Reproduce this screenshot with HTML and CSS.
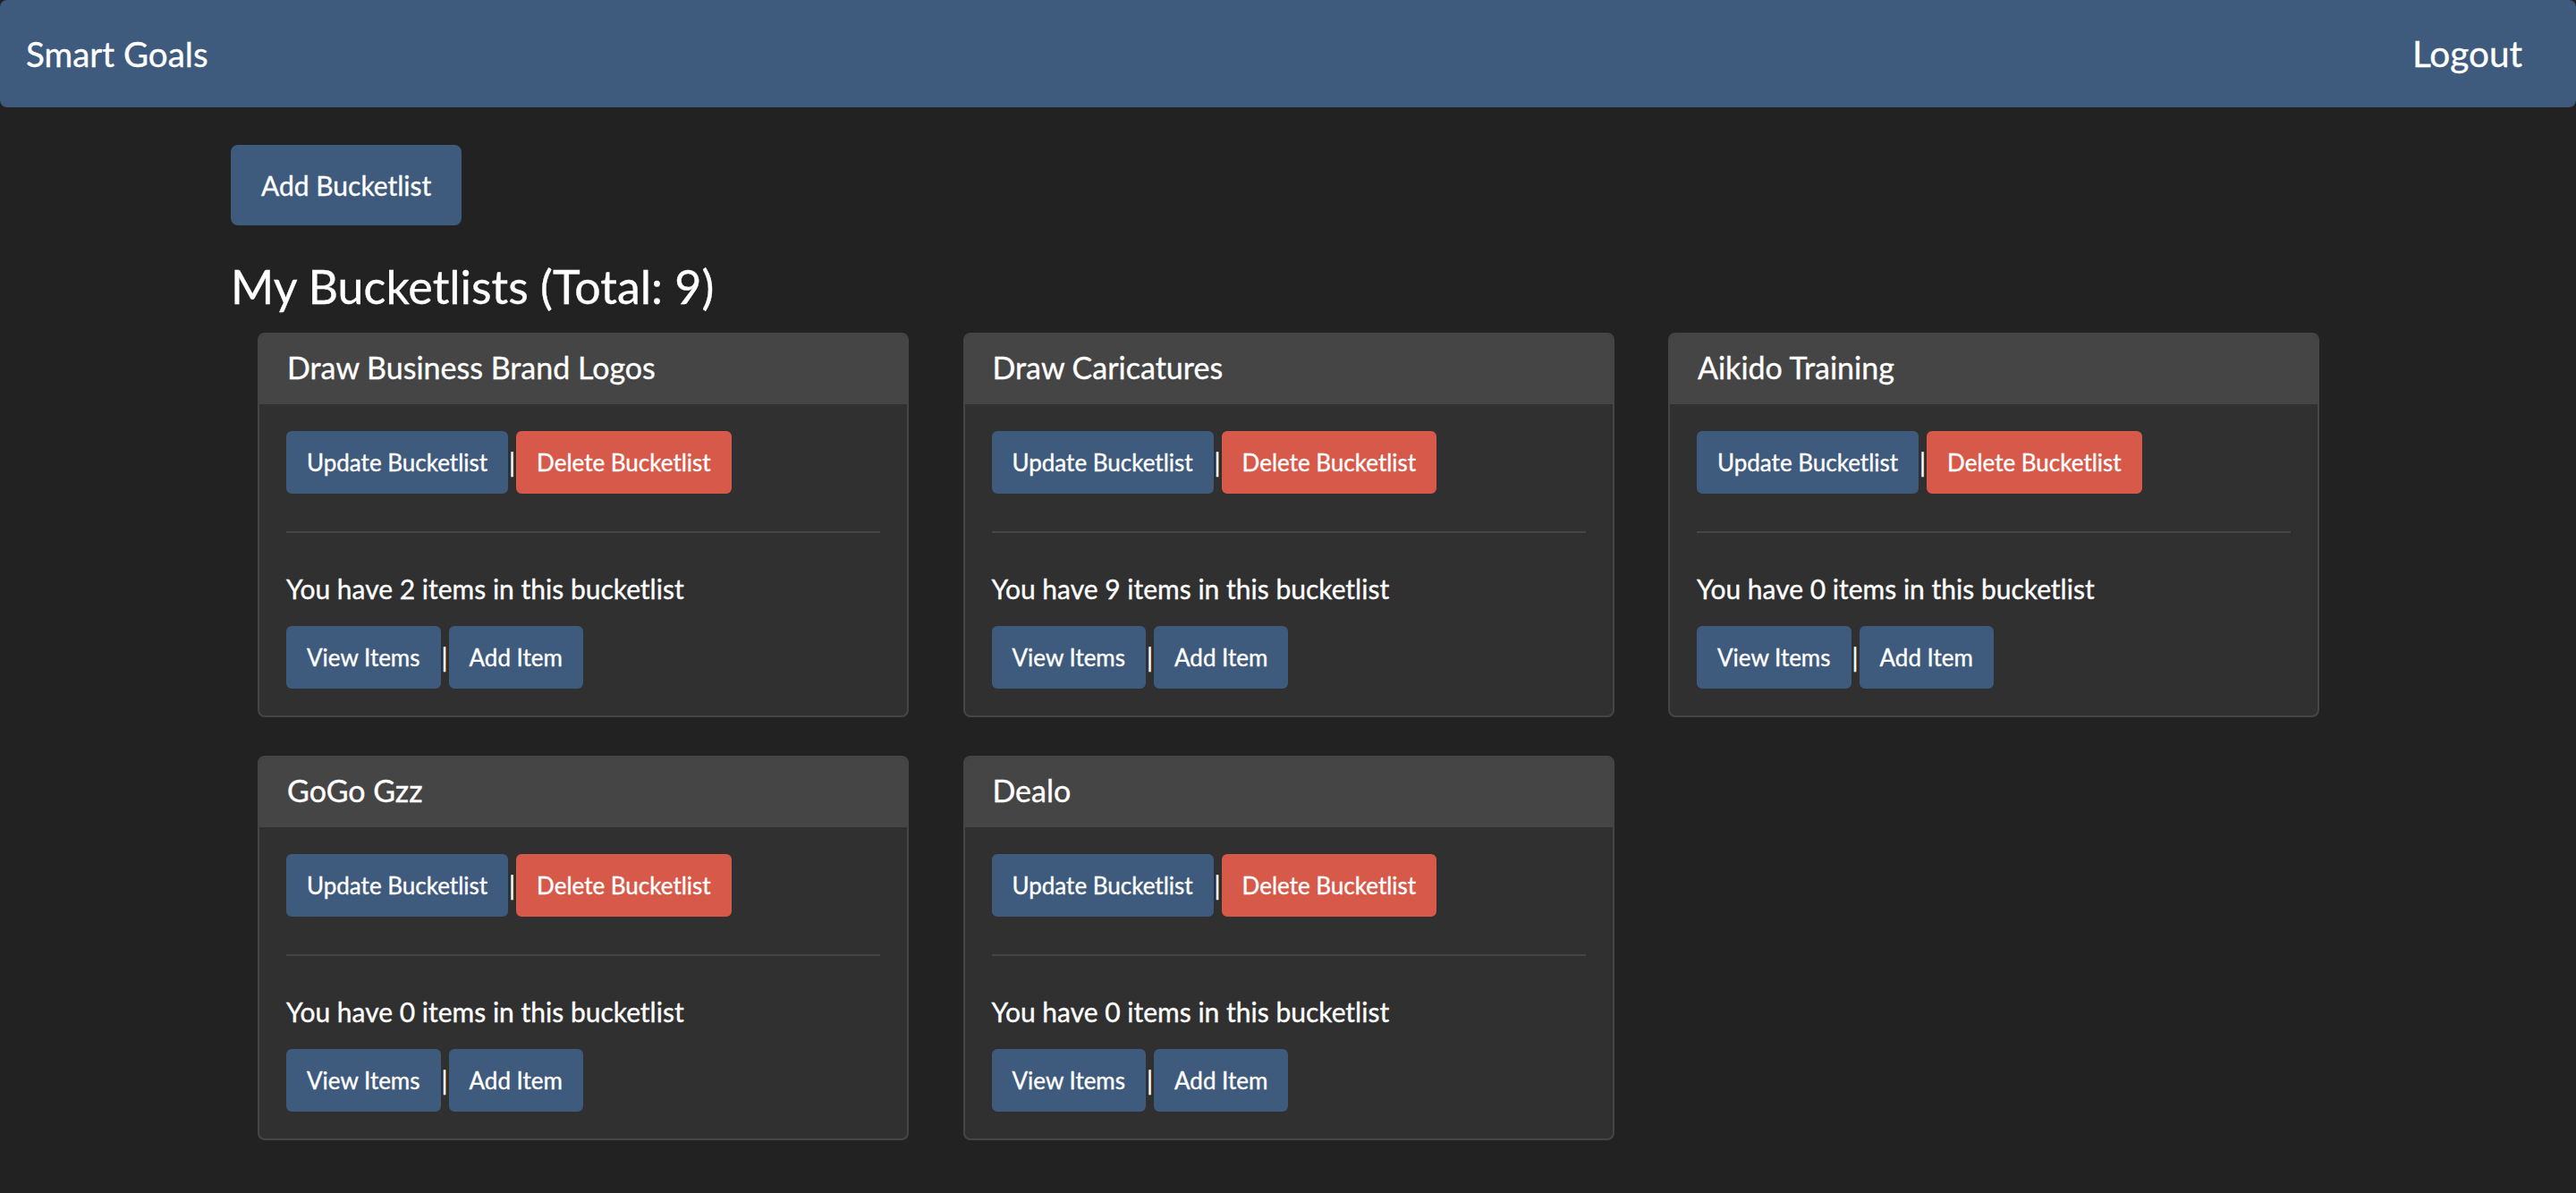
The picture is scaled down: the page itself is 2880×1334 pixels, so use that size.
FILE: index.html
```html
<!DOCTYPE html>
<html lang="en">
<head>
<meta charset="utf-8">
<title>Smart Goals</title>
<link rel="stylesheet" href="styles.css">
</head>
<body>
<nav class="navbar">
  <a class="brand">Smart Goals</a>
  <a class="nav-link">Logout</a>
</nav>
<main class="container">
  <button class="btn btn-primary btn-lg">Add Bucketlist</button>
  <h3 class="page-title">My Bucketlists (Total: 9)</h3>
  <div class="cards">
    <section class="card">
      <div class="card-head"><h4 class="card-title">Draw Business Brand Logos</h4></div>
      <div class="card-body">
        <div class="btn-row"><button class="btn btn-primary">Update Bucketlist</button><span class="sep">|</span><button class="btn btn-danger">Delete Bucketlist</button></div>
        <hr class="rule">
        <p class="count">You have 2 items in this bucketlist</p>
        <div class="btn-row"><button class="btn btn-primary">View Items</button><span class="sep">|</span><button class="btn btn-primary">Add Item</button></div>
      </div>
    </section>
    <section class="card">
      <div class="card-head"><h4 class="card-title">Draw Caricatures</h4></div>
      <div class="card-body">
        <div class="btn-row"><button class="btn btn-primary">Update Bucketlist</button><span class="sep">|</span><button class="btn btn-danger">Delete Bucketlist</button></div>
        <hr class="rule">
        <p class="count">You have 9 items in this bucketlist</p>
        <div class="btn-row"><button class="btn btn-primary">View Items</button><span class="sep">|</span><button class="btn btn-primary">Add Item</button></div>
      </div>
    </section>
    <section class="card">
      <div class="card-head"><h4 class="card-title">Aikido Training</h4></div>
      <div class="card-body">
        <div class="btn-row"><button class="btn btn-primary">Update Bucketlist</button><span class="sep">|</span><button class="btn btn-danger">Delete Bucketlist</button></div>
        <hr class="rule">
        <p class="count">You have 0 items in this bucketlist</p>
        <div class="btn-row"><button class="btn btn-primary">View Items</button><span class="sep">|</span><button class="btn btn-primary">Add Item</button></div>
      </div>
    </section>
    <section class="card">
      <div class="card-head"><h4 class="card-title">GoGo Gzz</h4></div>
      <div class="card-body">
        <div class="btn-row"><button class="btn btn-primary">Update Bucketlist</button><span class="sep">|</span><button class="btn btn-danger">Delete Bucketlist</button></div>
        <hr class="rule">
        <p class="count">You have 0 items in this bucketlist</p>
        <div class="btn-row"><button class="btn btn-primary">View Items</button><span class="sep">|</span><button class="btn btn-primary">Add Item</button></div>
      </div>
    </section>
    <section class="card">
      <div class="card-head"><h4 class="card-title">Dealo</h4></div>
      <div class="card-body">
        <div class="btn-row"><button class="btn btn-primary">Update Bucketlist</button><span class="sep">|</span><button class="btn btn-danger">Delete Bucketlist</button></div>
        <hr class="rule">
        <p class="count">You have 0 items in this bucketlist</p>
        <div class="btn-row"><button class="btn btn-primary">View Items</button><span class="sep">|</span><button class="btn btn-primary">Add Item</button></div>
      </div>
    </section>
  </div>
</main>
</body>
</html>
```

FILE: styles.css
```css
* { box-sizing: border-box; }

html, body {
  margin: 0;
  padding: 0;
}

body {
  background: #222222;
  color: #ffffff;
  font-family: Lato, "Open Sans", "Liberation Sans", sans-serif;
  font-size: 30px;
  line-height: 1.42857;
  min-height: 1334px;
  -webkit-text-stroke: 0.35px #ffffff;
}

.navbar {
  height: 120px;
  background: #3e5a7c;
  border-radius: 8px;
  display: flex;
  align-items: center;
  justify-content: space-between;
  padding: 0 60px 0 29px;
}

.brand,
.nav-link {
  color: #ffffff;
  line-height: 40px;
  text-decoration: none;
}

.brand {
  font-size: 38.5px;
}

.nav-link {
  font-size: 40.5px;
}

.container {
  padding: 42px 0 0 258px;
}

.btn {
  font-family: inherit;
  color: #ffffff;
  border: 2px solid transparent;
  border-radius: 6px;
  display: inline-flex;
  align-items: center;
  justify-content: center;
  cursor: pointer;
  margin: 0;
  -webkit-text-stroke: 0.35px #ffffff;
}

.btn-primary {
  background: #3e5a7c;
  border-color: #3e5a7c;
}

.btn-danger {
  background: #d6594a;
  border-color: #d6594a;
}

.btn-lg {
  height: 90px;
  padding: 0 32px;
  font-size: 30px;
  border-radius: 8px;
}

.page-title {
  font-size: 52px;
  font-weight: 400;
  line-height: 57px;
  margin: 40px 0 23px 0;
}

.cards {
  display: grid;
  grid-template-columns: repeat(3, 728px);
  column-gap: 60.5px;
  row-gap: 43px;
  margin-left: 30px;
}

.card {
  border: 2px solid #464545;
  border-radius: 8px;
  background: #303030;
  overflow: hidden;
}

.card-head {
  background: #464545;
  height: 78px;
  padding: 18px 30px 0 31px;
}

.card-title {
  margin: 0;
  font-size: 34px;
  font-weight: 400;
  line-height: 37.4px;
}

.card-body {
  padding: 30px;
}

.btn-row {
  display: flex;
  align-items: center;
}

.btn-row .btn {
  height: 70px;
  padding: 0 21px;
  font-size: 26px;
}

.sep {
  width: 9px;
  text-align: center;
  font-size: 28px;
  line-height: 30px;
}

.rule {
  border: 0;
  border-top: 2px solid #464545;
  margin: 42px 0 41px 0;
  height: 0;
}

.count {
  margin: 0 0 20px 0;
  line-height: 43px;
}
```
